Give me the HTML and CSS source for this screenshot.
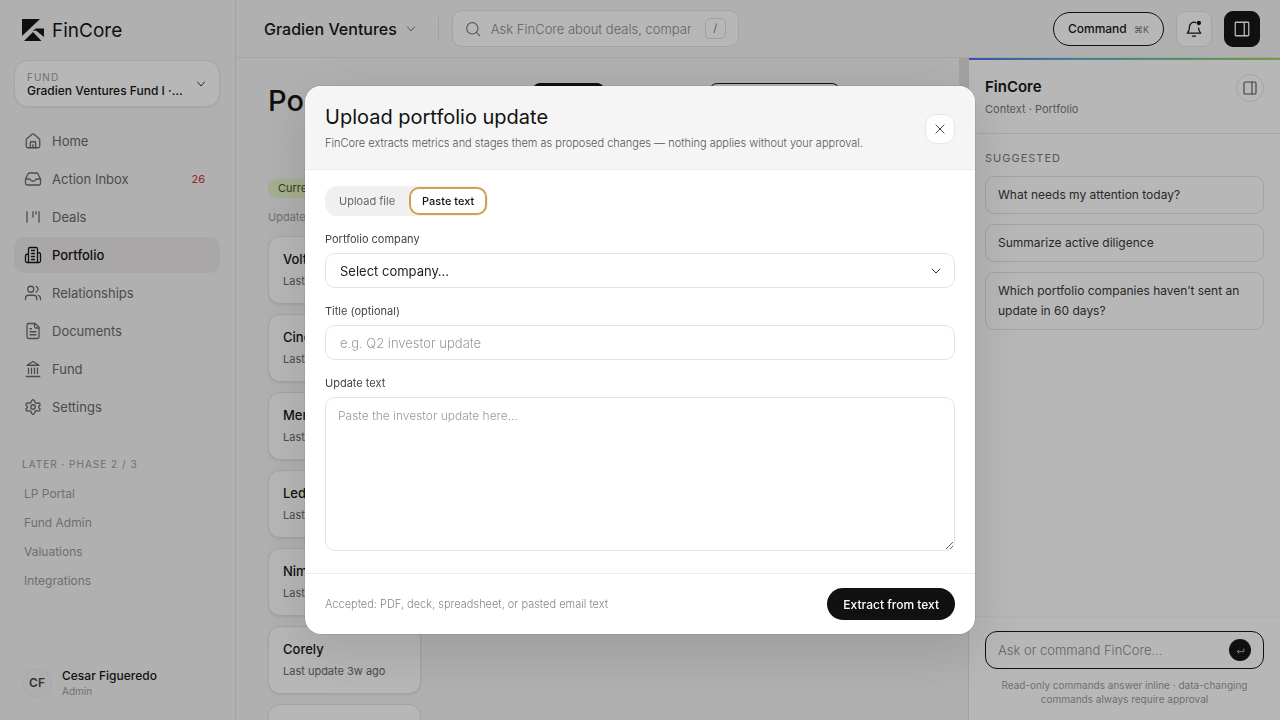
FILE: index.html
```html
<!DOCTYPE html>
<html lang="en">
<head>
  <meta charset="UTF-8" />
  <meta name="viewport" content="width=device-width, initial-scale=1.0"/>
  <title>Portfolio | FinCore</title>
  <link rel="stylesheet" href="styles.css">
</head>
<body>
  <div class="app">
    <!-- Sidebar -->
    <aside class="sidebar">
      <div class="brand">
        <svg width="22" height="22" viewBox="0 0 22 22" fill="#111"><path d="M0 0H18L0 17Z"/><path d="M10.500 12L14 9.500H22V18L14 11.500Z"/><path d="M2 22L11 13L19.500 22Z"/></svg>
        <span>FinCore</span>
      </div>
      <button class="fund-select">
        <span class="fund-text">
          <span class="fund-label">FUND</span>
          <span class="fund-name">Gradien Ventures Fund I ·…</span>
        </span>
        <svg class="icon" width="12" height="12" viewBox="0 0 24 24"><path d="M5 8l7 8 7-8"/></svg>
      </button>
      <nav class="nav">
        <a href="#">
          <svg class="icon" width="18" height="18" viewBox="0 0 24 24"><path d="M3 10.500a2 2 0 0 1 .7-1.500l7-6a2 2 0 0 1 2.600 0l7 6a2 2 0 0 1 .7 1.500V19a2 2 0 0 1-2 2H5a2 2 0 0 1-2-2z"/><path d="M8.500 21v-7a1 1 0 0 1 1-1h5a1 1 0 0 1 1 1v7M12 17v4"/></svg>
          <span>Home</span>
        </a>
        <a href="#">
          <svg class="icon" width="18" height="18" viewBox="0 0 24 24"><path d="M2 12h5c1.500 0 2 3 5 3s3.500-3 5-3h5"/><path d="M5.500 5.100L2 12v6a2 2 0 0 0 2 2h16a2 2 0 0 0 2-2v-6l-3.500-6.900A2 2 0 0 0 16.800 4H7.200a2 2 0 0 0-1.700 1.100z"/></svg>
          <span>Action Inbox</span>
          <span class="count">26</span>
        </a>
        <a href="#">
          <svg class="icon" width="18" height="18" viewBox="0 0 24 24"><path d="M4 5v14M12 5v7M20 5v14M16 5v3"/></svg>
          <span>Deals</span>
        </a>
        <a href="#" class="active">
          <svg class="icon" width="18" height="18" viewBox="0 0 24 24"><path d="M6 22V4a2 2 0 0 1 2-2h8a2 2 0 0 1 2 2v18z"/><path d="M6 11H4a2 2 0 0 0-2 2v7a2 2 0 0 0 2 2h2M18 9h2a2 2 0 0 1 2 2v9a2 2 0 0 1-2 2h-2M10 6h4M10 10h4M10 14h4M10 18h4"/></svg>
          <span>Portfolio</span>
        </a>
        <a href="#">
          <svg class="icon" width="18" height="18" viewBox="0 0 24 24"><circle cx="9" cy="7" r="4"/><path d="M2 21v-2a4 4 0 0 1 4-4h7a4 4 0 0 1 4 4v2M16 3.200a4 4 0 0 1 0 7.600M22 21v-2a4 4 0 0 0-3-3.800"/></svg>
          <span>Relationships</span>
        </a>
        <a href="#">
          <svg class="icon" width="18" height="18" viewBox="0 0 24 24"><path d="M15 2H6a2 2 0 0 0-2 2v16a2 2 0 0 0 2 2h12a2 2 0 0 0 2-2V7z"/><path d="M14 2v4a2 2 0 0 0 2 2h4M8 9h2M8 13h8M8 17h8"/></svg>
          <span>Documents</span>
        </a>
        <a href="#">
          <svg class="icon" width="18" height="18" viewBox="0 0 24 24"><path d="M3 22h18M6 18v-7M10 18v-7M14 18v-7M18 18v-7M12 2l8 5H4z"/></svg>
          <span>Fund</span>
        </a>
        <a href="#">
          <svg class="icon" width="18" height="18" viewBox="0 0 24 24"><path d="M10 3.600L12 2l2 1.600.6 2.400 1.900 1.100 2.500-.7 2 .8.400 2.200-1.900 1.900v1.400l1.900 1.900-.4 2.200-2 .8-2.500-.7-1.900 1.100-.6 2.400L12 22l-2-1.600-.6-2.400-1.900-1.100-2.500.7-2-.8-.4-2.200 1.900-1.900v-1.400L2.600 9.400 3 7.200l2-.8 2.500.7L9.400 6z"/><circle cx="12" cy="12" r="3"/></svg>
          <span>Settings</span>
        </a>
      </nav>
      <div class="later-title">LATER · PHASE 2 / 3</div>
      <nav class="later">
        <a href="#">LP Portal</a>
        <a href="#">Fund Admin</a>
        <a href="#">Valuations</a>
        <a href="#">Integrations</a>
      </nav>
      <div class="user">
        <span class="avatar">CF</span>
        <div>
          <div class="user-name">Cesar Figueredo</div>
          <div class="user-role">Admin</div>
        </div>
      </div>
    </aside>

    <!-- Top bar -->
    <header class="topbar">
      <button class="org">Gradien Ventures
        <svg class="icon" width="12" height="12" viewBox="0 0 24 24"><path d="M5 8l7 8 7-8"/></svg>
      </button>
      <span class="divider"></span>
      <div class="search">
        <svg class="icon" width="16" height="16" viewBox="0 0 24 24"><circle cx="11" cy="11" r="8.500"/><path d="M17.500 17.500L22 22"/></svg>
        <input type="text" aria-label="Search" placeholder="Ask FinCore about deals, companies">
        <kbd>/</kbd>
      </div>
      <div class="top-actions">
        <button class="command">Command <span>⌘K</span></button>
        <button class="square" aria-label="Notifications">
          <svg class="icon" width="18" height="18" viewBox="0 0 24 24"><path d="M14.500 3.500A6 6 0 0 0 6 9c0 5-1 6.500-3 8.500h18c-1.500-1.500-2.500-3-2.900-6.500M10 21.500h4"/><circle class="dot" cx="18.500" cy="4" r="2"/></svg>
        </button>
        <button class="square dark" aria-label="Toggle panel">
          <svg class="icon" width="18" height="18" viewBox="0 0 24 24"><rect x="3" y="3" width="18" height="18" rx="1"/><path d="M15 3v18"/></svg>
        </button>
      </div>
    </header>

    <!-- Portfolio list -->
    <main class="main">
      <div class="page-head">
        <h1>Portfolio</h1>
        <button class="head-btn filled">Board</button>
        <button class="head-btn outlined">Upload update</button>
      </div>
      <span class="pill">Current</span>
      <p class="updated">Updated recently</p>
      <div class="cards">
        <div class="card"><h3>Voltera</h3><p>Last update 3w ago</p></div>
        <div class="card"><h3>Cinder</h3><p>Last update 3w ago</p></div>
        <div class="card"><h3>Meridian</h3><p>Last update 3w ago</p></div>
        <div class="card"><h3>Ledgerly</h3><p>Last update 3w ago</p></div>
        <div class="card"><h3>Nimbus</h3><p>Last update 3w ago</p></div>
        <div class="card"><h3>Corely</h3><p>Last update 3w ago</p></div>
        <div class="card empty"></div>
      </div>
      <span class="scroll-thumb"></span>
    </main>

    <!-- Assistant panel -->
    <aside class="panel">
      <div class="panel-head">
        <div>
          <h2>FinCore</h2>
          <p>Context · Portfolio</p>
        </div>
        <button class="round" aria-label="Close panel">
          <svg class="icon" width="16" height="16" viewBox="0 0 24 24"><rect x="3" y="3" width="18" height="18" rx="2"/><path d="M15 3v18"/></svg>
        </button>
      </div>
      <div class="suggested">
        <div class="suggested-title">SUGGESTED</div>
        <button>What needs my attention today?</button>
        <button>Summarize active diligence</button>
        <button>Which portfolio companies haven’t sent an update in 60 days?</button>
      </div>
      <div class="panel-foot">
        <div class="ask">
          <input type="text" aria-label="Ask FinCore" placeholder="Ask or command FinCore…">
          <button aria-label="Send"><svg class="icon" width="9" height="9" viewBox="0 0 24 24"><path d="M21 8v7H4M8 11l-4 4 4 4"/></svg></button>
        </div>
        <p>Read-only commands answer inline · data-changing commands always require approval</p>
      </div>
    </aside>
  </div>

  <!-- Upload dialog -->
  <div class="overlay">
    <div class="modal" role="dialog" aria-labelledby="modal-title">
      <div class="modal-head">
        <div>
          <h2 id="modal-title">Upload portfolio update</h2>
          <p>FinCore extracts metrics and stages them as proposed changes — nothing applies without your approval.</p>
        </div>
        <button class="close" aria-label="Close">
          <svg class="icon" width="14" height="14" viewBox="0 0 24 24"><path d="M5 5l14 14M19 5L5 19"/></svg>
        </button>
      </div>
      <form class="modal-body" id="update-form">
        <div class="tabs">
          <button type="button">Upload file</button>
          <button type="button" class="selected">Paste text</button>
        </div>
        <label for="company">Portfolio company</label>
        <div class="select-wrap">
          <select id="company"><option>Select company…</option></select>
          <svg class="icon" width="12" height="12" viewBox="0 0 24 24"><path d="M4 8l8 8 8-8"/></svg>
        </div>
        <label for="title">Title (optional)</label>
        <input id="title" type="text" placeholder="e.g. Q2 investor update">
        <label for="text">Update text</label>
        <textarea id="text" placeholder="Paste the investor update here…"></textarea>
      </form>
      <div class="modal-foot">
        <span>Accepted: PDF, deck, spreadsheet, or pasted email text</span>
        <button type="submit" form="update-form">Extract from text</button>
      </div>
    </div>
  </div>
</body>
</html>
```
FILE: styles.css
```css
* {
  box-sizing: border-box;
}
body {
  font-family: Inter, Arial, sans-serif;
  font-size: 13px;
  color: #111;
  background: #f5f5f5;
  margin: 0;
}
h1, h2, h3, p {
  margin: 0;
  font-weight: 400;
}
button, input, select, textarea {
  font: inherit;
  color: inherit;
}
button {
  cursor: pointer;
}
a {
  color: inherit;
  text-decoration: none;
}
.icon {
  fill: none;
  stroke: currentColor;
  stroke-width: 1.7;
  stroke-linecap: round;
  stroke-linejoin: round;
  flex-shrink: 0;
}
.app {
  display: grid;
  grid-template-columns: 236px minmax(0, 1fr) 312px;
  grid-template-rows: 58px minmax(0, 1fr);
  height: 100vh;
  overflow: hidden;
}

/* Sidebar */
.sidebar {
  grid-row: 1 / 3;
  border-right: 1px solid #e4e4e4;
  padding: 18px 15px 22px 14px;
  display: flex;
  flex-direction: column;
}
.brand {
  display: flex;
  align-items: center;
  gap: 8px;
  padding-left: 8px;
  height: 24px;
  font-size: 19px;
}
.fund-select {
  display: flex;
  align-items: center;
  justify-content: space-between;
  height: 47px;
  margin: 18px 0 16px;
  padding: 0 12px;
  border: 1px solid #e8e8e8;
  border-radius: 14px;
  background: #fff;
  text-align: left;
  box-shadow: 0 1px 2px rgba(0, 0, 0, 0.06);
}
.fund-text span {
  display: block;
  line-height: 14px;
}
.fund-text .fund-label {
  font-size: 10px;
  letter-spacing: 1px;
  color: #999;
}
.fund-name {
  font-size: 12px;
  font-weight: 500;
}
.nav {
  display: grid;
  gap: 2px;
}
.nav a {
  display: flex;
  align-items: center;
  gap: 10px;
  height: 36px;
  padding: 0 15px 0 10px;
  border-radius: 10px;
  color: #666;
}
.nav .active {
  background: #ebe8e8;
  color: #111;
  font-weight: 500;
}
.nav .count {
  margin-left: auto;
  font-size: 11px;
  color: #d02c3c;
}
.later-title {
  margin: 32px 0 8px;
  padding-left: 8px;
  font-size: 10px;
  line-height: 14px;
  letter-spacing: 1px;
  color: #999;
}
.later a {
  display: block;
  padding-left: 10px;
  font-size: 12px;
  line-height: 29px;
  color: #999;
}
.user {
  display: flex;
  align-items: center;
  gap: 10px;
  margin-top: auto;
  padding-left: 8px;
}
.avatar {
  width: 30px;
  height: 30px;
  border: 1px solid #f0eaea;
  border-radius: 50%;
  background: #f4f2f2;
  font-size: 12px;
  font-weight: 600;
  line-height: 28px;
  text-align: center;
  color: #444;
}
.user-name {
  font-size: 12px;
  line-height: 16px;
  font-weight: 500;
}
.user-role {
  font-size: 10px;
  line-height: 14px;
  color: #999;
}

/* Top bar */
.topbar {
  grid-column: 2 / 4;
  display: flex;
  align-items: center;
  padding: 0 20px 0 28px;
  border-bottom: 1px solid #e4e4e4;
}
.org {
  display: flex;
  align-items: center;
  gap: 8px;
  padding: 0;
  border: 0;
  background: none;
  font-size: 16px;
  font-weight: 500;
}
.org .icon {
  color: #555;
}
.divider {
  width: 1px;
  height: 24px;
  margin: 0 13px 0 21px;
  background: #e0e0e0;
}
.search {
  display: flex;
  align-items: center;
  width: 287px;
  height: 37px;
  padding: 0 12px;
  border: 1px solid #e4e4e4;
  border-radius: 10px;
  background: #fff;
  color: #777;
}
.search input {
  flex: 1;
  min-width: 0;
  margin: 0 14px 0 10px;
  padding: 0;
  border: 0;
  background: none;
}
::placeholder {
  color: #999;
  font-weight: 300;
  opacity: 1;
}
.search ::placeholder, .ask ::placeholder {
  color: #888;
}
.search kbd {
  width: 21px;
  height: 21px;
  border: 1px solid #ddd;
  border-radius: 5px;
  font: inherit;
  font-size: 11px;
  line-height: 19px;
  text-align: center;
}
.top-actions {
  display: flex;
  align-items: center;
  gap: 12px;
  margin-left: auto;
}
.command {
  height: 34px;
  padding: 0 14px;
  border: 1px solid #111;
  border-radius: 17px;
  background: #fff;
  font-size: 12px;
  font-weight: 500;
}
.command span {
  margin-left: 4px;
  font-size: 9px;
  font-weight: 400;
  color: #777;
}
.square {
  display: grid;
  place-items: center;
  width: 36px;
  height: 36px;
  padding: 0;
  border: 1px solid #e6e6e6;
  border-radius: 9px;
  background: #fff;
}
.square.dark {
  background: #111;
  border-color: #111;
  color: #fff;
}
.dot {
  fill: #111;
}

/* Portfolio list */
.main {
  position: relative;
  overflow: hidden;
  padding: 25px 32px 0;
}
.page-head {
  display: flex;
  align-items: flex-start;
}
.page-head h1 {
  flex: 0 0 264px;
  font-size: 29px;
  line-height: 36px;
  font-weight: 500;
}
.head-btn {
  height: 34px;
  border: 1px solid #111;
  border-radius: 8px;
  background: #fff;
}
.head-btn.filled {
  width: 73px;
  background: #111;
  color: #fff;
}
.head-btn.outlined {
  width: 131px;
  margin-left: 104px;
}
.pill {
  display: inline-block;
  margin-top: 60px;
  padding: 0 10px;
  border-radius: 10px;
  background: #e4f3c8;
  color: #3f5424;
  font-size: 11px;
  line-height: 19px;
}
.updated {
  margin: 10px 0;
  font-size: 11px;
  line-height: 18px;
  color: #999;
}
.cards {
  display: grid;
  gap: 10px;
  width: 153px;
}
.card {
  padding: 11px 14px;
  border: 1px solid #e4e4e4;
  border-radius: 12px;
  background: #fff;
  box-shadow: 0 1px 2px rgba(0, 0, 0, 0.08);
}
.card.empty {
  height: 68px;
}
.card h3 {
  font-size: 13px;
  line-height: 22px;
  font-weight: 500;
}
.card p {
  font-size: 11px;
  line-height: 22px;
  color: #666;
}
.scroll-thumb {
  position: absolute;
  top: 0;
  right: 0;
  width: 9px;
  height: 70%;
  background: #e2dfdf;
}

/* Assistant panel */
.panel {
  display: flex;
  flex-direction: column;
  border-left: 1px solid #e0e0e0;
  background: #fff;
}
.panel::before {
  content: "";
  height: 2px;
  background: linear-gradient(90deg, #4a6cf0, #5fb0cf, #72c893, #a4d65e);
}
.panel-head {
  display: flex;
  justify-content: space-between;
  align-items: flex-start;
  height: 74px;
  padding: 14px 16px;
  border-bottom: 1px solid #e8e8e8;
}
.panel-head h2 {
  font-size: 15px;
  line-height: 26px;
  font-weight: 600;
}
.panel-head p {
  font-size: 11px;
  line-height: 18px;
  color: #777;
}
.round {
  display: grid;
  place-items: center;
  width: 28px;
  height: 28px;
  padding: 0;
  border: 1px solid #e4e4e4;
  border-radius: 50%;
  background: #fff;
  color: #555;
}
.suggested {
  display: grid;
  gap: 10px;
  padding: 16px;
}
.suggested-title {
  font-size: 11px;
  line-height: 16px;
  letter-spacing: 1px;
  color: #777;
}
.suggested button {
  padding: 8px 12px;
  border: 1px solid #e2e2e2;
  border-radius: 9px;
  background: #fff;
  font-size: 12px;
  line-height: 20px;
  text-align: left;
  color: #333;
}
.panel-foot {
  margin-top: auto;
  padding: 14px 16px;
  border-top: 1px solid #f8f8f8;
}
.ask {
  display: flex;
  align-items: center;
  height: 38px;
  padding: 0 12px;
  border: 1px solid #111;
  border-radius: 12px;
}
.ask input {
  flex: 1;
  min-width: 0;
  padding: 0;
  border: 0;
  background: none;
}
.ask button {
  display: grid;
  place-items: center;
  width: 22px;
  height: 22px;
  padding: 0;
  border: 0;
  border-radius: 50%;
  background: #111;
  color: #fff;
}
.panel-foot p {
  margin-top: 9px;
  padding: 0 16px;
  font-size: 10px;
  line-height: 14px;
  text-align: center;
  color: #999;
}

/* Upload dialog */
.overlay {
  position: fixed;
  inset: 0;
  display: flex;
  align-items: center;
  justify-content: center;
  background: rgba(17, 17, 17, 0.3);
}
.modal {
  width: 100%;
  max-width: 670px;
  border-radius: 16px;
  overflow: hidden;
  background: #fff;
  box-shadow: 0 0 0 1px rgba(0, 0, 0, 0.06), 0 16px 48px rgba(40, 20, 20, 0.14);
}
.modal-head {
  display: flex;
  align-items: center;
  justify-content: space-between;
  height: 84px;
  padding: 6px 20px 4px;
  border-bottom: 1px solid #ececec;
  background: #f5f5f5;
}
.modal-head h2 {
  font-size: 20px;
  line-height: 28px;
}
.modal-head p {
  font-size: 11px;
  font-weight: 300;
  line-height: 24px;
  color: #555;
}
.close {
  display: grid;
  place-items: center;
  width: 30px;
  height: 30px;
  padding: 0;
  border: 1px solid #e6e6e6;
  border-radius: 11px;
  background: #fff;
  color: #444;
}
.modal-body {
  display: flex;
  flex-direction: column;
  padding: 16px 20px 22px;
}
.tabs {
  display: flex;
  align-self: flex-start;
  padding: 1px;
  border-radius: 12px;
  background: #f1eff0;
}
.tabs button {
  height: 28px;
  padding: 0 14px 0 13px;
  border: 0;
  border-radius: 10px;
  background: none;
  font-size: 11px;
  color: #666;
}
.tabs .selected {
  padding: 0 11px;
  border: 2px solid #cfa349;
  background: #fff;
  color: #111;
  font-weight: 500;
}
.modal-body label {
  margin: 14px 0 5px;
  font-size: 11px;
  line-height: 18px;
  color: #444;
}
.modal-body input, .modal-body select, .modal-body textarea {
  width: 100%;
  border: 1px solid #e2e2e2;
  border-radius: 10px;
  background: #fff;
}
.modal-body input, .modal-body select {
  height: 35px;
  padding: 0 14px;
}
.select-wrap {
  position: relative;
}
.select-wrap select {
  display: block;
  appearance: none;
  color: #222;
}
.select-wrap .icon {
  position: absolute;
  top: 12px;
  right: 13px;
  pointer-events: none;
}
.modal-body textarea {
  height: 154px;
  padding: 8px 12px;
  font-size: 12px;
  line-height: 20px;
  resize: vertical;
}
.modal-foot {
  display: flex;
  align-items: center;
  justify-content: space-between;
  height: 61px;
  padding: 0 20px;
  border-top: 1px solid #ececec;
}
.modal-foot span {
  font-size: 11px;
  font-weight: 300;
  color: #888;
}
.modal-foot button {
  height: 32px;
  padding: 0 16px;
  border: 0;
  border-radius: 16px;
  background: #111;
  color: #fff;
  font-size: 12px;
  font-weight: 500;
}
```
